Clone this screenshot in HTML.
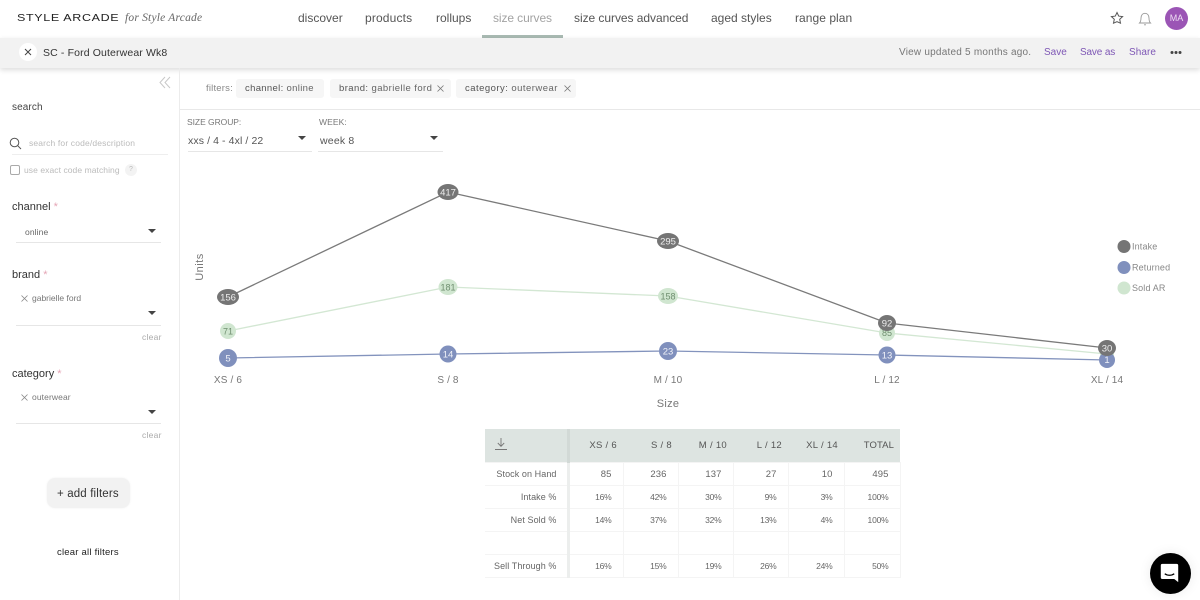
<!DOCTYPE html>
<html lang="en"><head><meta charset="utf-8"><title>Style Arcade - size curves</title>
<style>
html,body{margin:0;padding:0;background:#fff}
body{width:1200px;height:600px;overflow:hidden;position:relative;font-family:"Liberation Sans",sans-serif;color:#555}
.t{position:absolute;white-space:nowrap;line-height:16px;height:16px}
.b{position:absolute}
.nav{font-size:12px;color:#555;top:10px}
.g{font-size:9.5px;color:#777;letter-spacing:.2px}
.lab{font-size:11px;color:#333;left:12px}
.lab i{font-style:normal;color:#e5a5b5}
.ln{position:absolute;height:1px;background:#e6e6e6}
.arr{position:absolute;width:0;height:0;border-left:4px solid transparent;border-right:4px solid transparent;border-top:4px solid #444}
.chip{position:absolute;top:79px;height:19px;background:#f6f6f6;border-radius:3px}
table{position:absolute;left:485px;top:429px;width:415px;border-collapse:collapse;table-layout:fixed;font-size:9.5px;color:#666;letter-spacing:.1px}
th{background:#dde4e1;height:33px;padding:0 6px 0 0;text-align:right;font-weight:normal;font-size:9.5px;color:#555;letter-spacing:.3px;border:0}
td{padding:0 11px 0 0;text-align:right;border:1px solid #f4f4f4;height:22px;box-sizing:border-box}
td:first-child{padding-right:10px;border-right:3px solid #eceeed;border-left:0;font-size:9px;letter-spacing:.08px}
th:first-child{border-right:3px solid #d2d9d6}
tr.p td{font-size:8.5px;letter-spacing:-.2px}
tr.p td:first-child{font-size:9px;letter-spacing:.08px}
</style></head><body>

<!-- header -->
<div class="t" style="left:17px;top:10px;font-size:10.5px;color:#222;letter-spacing:.55px;transform-origin:0 50%;transform:scaleX(1.19)">STYLE ARCADE</div>
<div class="t" style="left:125px;top:10px;font:italic 11.5px/16px 'Liberation Serif',serif;color:#666;letter-spacing:.2px">for Style Arcade</div>
<div class="t nav" style="left:298px">discover</div>
<div class="t nav" style="left:365px;letter-spacing:.15px">products</div>
<div class="t nav" style="left:436px">rollups</div>
<div class="t nav" style="left:493px;color:#a3a3a3;letter-spacing:-.1px">size curves</div>
<div class="b" style="left:482px;top:35px;width:81px;height:2.5px;background:#a9bab3"></div>
<div class="t nav" style="left:574px;letter-spacing:-.05px">size curves advanced</div>
<div class="t nav" style="left:711px">aged styles</div>
<div class="t nav" style="left:795px;letter-spacing:.05px">range plan</div>

<svg class="b" style="left:1110px;top:11px" width="14" height="14" viewBox="0 0 14 14"><path d="M7 1.500l1.700 3.600 3.900.5-2.900 2.700.8 3.900L7 10.700l-3.500 1.500.8-3.900L1.400 5.600l3.900-.5z" fill="none" stroke="#555" stroke-width="1"/></svg>
<svg class="b" style="left:1138px;top:11px" width="14" height="15" viewBox="0 0 14 15"><path d="M1.500 12c1-1 1.500-2 1.500-5 0-2.700 1.600-4.700 4-4.700s4 2 4 4.700c0 3 .5 4 1.500 5zM6 13.800h2" fill="none" stroke="#999" stroke-width=".9"/></svg>
<div class="b" style="left:1165px;top:7px;width:23px;height:23px;border-radius:50%;background:#9b55b5;color:#eedff3;font-size:9px;line-height:23px;text-align:center">MA</div>

<!-- title bar -->
<div class="b" style="left:0;top:38px;width:1200px;height:30px;background:#f2f2f2;box-shadow:0 2px 5px rgba(0,0,0,.14)"></div>
<div class="b" style="left:19px;top:43px;width:18px;height:18px;border-radius:50%;background:#fff"></div>
<svg class="b" style="left:24px;top:48px" width="8" height="8" viewBox="0 0 8 8"><path d="M1 1l6 6M7 1l-6 6" stroke="#444" stroke-width="1"/></svg>
<div class="t" style="left:43px;top:45px;font-size:10.5px;color:#333;letter-spacing:.13px">SC - Ford Outerwear Wk8</div>
<div class="t" style="left:899px;top:45px;font-size:10px;color:#777;letter-spacing:.22px">View updated 5 months ago.</div>
<div class="t" style="left:1044px;top:45px;font-size:10px;color:#7e57b5">Save</div>
<div class="t" style="left:1080px;top:45px;font-size:10px;color:#7e57b5;letter-spacing:-.15px">Save as</div>
<div class="t" style="left:1129px;top:45px;font-size:10px;color:#7e57b5;letter-spacing:.05px">Share</div>
<svg class="b" style="left:1170px;top:50px" width="12" height="5"><circle cx="2" cy="2.500" r="1.500" fill="#444"/><circle cx="6" cy="2.500" r="1.500" fill="#444"/><circle cx="10" cy="2.500" r="1.500" fill="#444"/></svg>

<!-- sidebar -->
<div class="b" style="left:179px;top:68px;width:1px;height:532px;background:#ececec"></div>
<svg class="b" style="left:159px;top:76px" width="12" height="13" viewBox="0 0 12 13"><path d="M6 1L1 6.500 6 12M11 1L6 6.500 11 12" fill="none" stroke="#c8c8c8" stroke-width="1"/></svg>
<div class="t" style="left:12px;top:100px;font-size:10px;color:#444;letter-spacing:.1px">search</div>
<svg class="b" style="left:9px;top:137px" width="13" height="13" viewBox="0 0 13 13"><circle cx="5.500" cy="5.500" r="4.300" fill="none" stroke="#555"/><path d="M8.700 8.700l3.300 3.300" stroke="#555"/></svg>
<div class="t" style="left:29px;top:135px;font-size:8.5px;color:#bbb;letter-spacing:.15px">search for code/description</div>
<div class="ln" style="left:12px;top:154px;width:156px;background:#eee"></div>
<div class="b" style="left:10px;top:165px;width:8px;height:8px;border:1px solid #aaa;border-radius:2px"></div>
<div class="t" style="left:24px;top:162px;font-size:8.5px;color:#bbb;letter-spacing:.07px">use exact code matching</div>
<div class="b" style="left:125px;top:164px;width:12px;height:12px;border-radius:50%;background:#f3f3f3;color:#bbb;font-size:7px;line-height:12px;text-align:center">?</div>

<div class="t lab" style="top:199px">channel <i>*</i></div>
<div class="t" style="left:25px;top:224px;font-size:8.5px;color:#666;letter-spacing:.1px">online</div>
<div class="arr" style="left:148px;top:229px"></div>
<div class="ln" style="left:16px;top:242px;width:145px"></div>

<div class="t lab" style="top:267px">brand <i>*</i></div>
<svg class="b" style="left:21px;top:295px" width="7" height="7"><path d="M.5.500l6 6M6.500.500l-6 6" stroke="#888" stroke-width=".8"/></svg>
<div class="t" style="left:32px;top:290px;font-size:8.5px;color:#777">gabrielle ford</div>
<div class="arr" style="left:148px;top:311px"></div>
<div class="ln" style="left:16px;top:325px;width:145px"></div>
<div class="t" style="left:142px;top:329px;font-size:8.5px;color:#aaa;letter-spacing:.25px">clear</div>

<div class="t lab" style="top:366px">category <i>*</i></div>
<svg class="b" style="left:21px;top:394px" width="7" height="7"><path d="M.5.500l6 6M6.500.500l-6 6" stroke="#888" stroke-width=".8"/></svg>
<div class="t" style="left:32px;top:389px;font-size:8.5px;color:#777;letter-spacing:.1px">outerwear</div>
<div class="arr" style="left:148px;top:410px"></div>
<div class="ln" style="left:16px;top:423px;width:145px"></div>
<div class="t" style="left:142px;top:427px;font-size:8.5px;color:#aaa;letter-spacing:.25px">clear</div>

<div class="b" style="left:47px;top:478px;width:83px;height:30px;border-radius:8px;background:#f2f2f2;box-shadow:0 0 2px rgba(0,0,0,.06)"></div>
<div class="t" style="left:57px;top:486px;font-size:11.5px;color:#333;letter-spacing:.15px">+ add filters</div>
<div class="t" style="left:57px;top:545px;font-size:9.5px;color:#222;letter-spacing:.22px">clear all filters</div>

<!-- filters row -->
<div class="t g" style="left:206px;top:81px;color:#888">filters:</div>
<div class="chip" style="left:236px;width:88px"></div>
<div class="t" style="left:245px;top:81px;font-size:9.5px;color:#666;letter-spacing:.33px"><span style="color:#555">channel:</span> online</div>
<div class="chip" style="left:330px;width:121px"></div>
<div class="t" style="left:339px;top:81px;font-size:9.5px;color:#666;letter-spacing:.42px"><span style="color:#555">brand:</span> gabrielle ford</div>
<svg class="b" style="left:437px;top:85px" width="7" height="7"><path d="M.5.500l6 6M6.500.500l-6 6" stroke="#777" stroke-width=".8"/></svg>
<div class="chip" style="left:456px;width:120px"></div>
<div class="t" style="left:465px;top:81px;font-size:9.5px;color:#666;letter-spacing:.47px"><span style="color:#555">category:</span> outerwear</div>
<svg class="b" style="left:564px;top:85px" width="7" height="7"><path d="M.5.500l6 6M6.500.500l-6 6" stroke="#777" stroke-width=".8"/></svg>
<div class="ln" style="left:180px;top:109px;width:1020px;background:#e8e8e8"></div>

<!-- selectors -->
<div class="t" style="left:187px;top:114px;font-size:8.5px;color:#777;letter-spacing:-.05px">SIZE GROUP:</div>
<div class="t" style="left:188px;top:133px;font-size:10.5px;color:#555;letter-spacing:.1px">xxs / 4 - 4xl / 22</div>
<div class="arr" style="left:298px;top:136px"></div>
<div class="ln" style="left:188px;top:151px;width:124px"></div>
<div class="t" style="left:319px;top:114px;font-size:8.5px;color:#777;letter-spacing:.1px">WEEK:</div>
<div class="t" style="left:320px;top:133px;font-size:10.5px;color:#555;letter-spacing:.2px">week 8</div>
<div class="arr" style="left:430px;top:136px"></div>
<div class="ln" style="left:318px;top:151px;width:125px"></div>

<!-- chart -->
<svg class="b" style="left:0;top:0" width="1200" height="600" viewBox="0 0 1200 600" font-family="'Liberation Sans',sans-serif" text-anchor="middle">
<polyline points="228,331 448,287 668,296 887,333 1107,354" fill="none" stroke="#d3e7d3" stroke-width="1.3"/>
<polyline points="228,358 448,354 668,351 887,355 1107,360" fill="none" stroke="#8393bd" stroke-width="1.3"/>
<polyline points="228,297 448,192 668,241 887,323 1107,348" fill="none" stroke="#7a7a7a" stroke-width="1.3"/>
<g fill="#d0e6d0"><circle cx="228" cy="331" r="8"/><ellipse cx="448" cy="287" rx="9.5" ry="8"/><ellipse cx="668" cy="296" rx="10" ry="8"/><circle cx="887" cy="333" r="8"/><circle cx="1107" cy="354" r="7"/></g>
<g fill="#6f8f6f" font-size="9"><text x="228" y="334.500">71</text><text x="448" y="290.500">181</text><text x="668" y="299.500">158</text><text x="887" y="336">85</text></g>
<g fill="#8090bd"><circle cx="228" cy="358" r="9"/><circle cx="448" cy="354" r="8.5"/><circle cx="668" cy="351" r="9"/><circle cx="887" cy="355" r="8.5"/><circle cx="1107" cy="360" r="8"/></g>
<g fill="#f0f2f8" font-size="9.5"><text x="228" y="361.500">5</text><text x="448" y="357.500">14</text><text x="668" y="354.500">23</text><text x="887" y="358.500">13</text><text x="1107" y="363">1</text></g>
<g fill="#757575"><ellipse cx="228" cy="297" rx="11" ry="8"/><ellipse cx="448" cy="192" rx="10.5" ry="8"/><ellipse cx="668" cy="241" rx="11" ry="8"/><ellipse cx="887" cy="323" rx="9" ry="8"/><ellipse cx="1107" cy="348" rx="9" ry="8"/></g>
<g fill="#eee" font-size="9.5"><text x="228" y="300.500">156</text><text x="448" y="195.500">417</text><text x="668" y="244.500">295</text><text x="887" y="326.500">92</text><text x="1107" y="351.500">30</text></g>
<g fill="#777" font-size="10" letter-spacing=".15"><text x="228" y="383">XS / 6</text><text x="448" y="383">S / 8</text><text x="668" y="383">M / 10</text><text x="887" y="383">L / 12</text><text x="1107" y="383">XL / 14</text></g>
<text x="668" y="407" fill="#777" font-size="11" letter-spacing=".3">Size</text>
<text transform="translate(203,267) rotate(-90)" fill="#777" font-size="11" letter-spacing=".5">Units</text>
<circle cx="1124" cy="246.500" r="6.5" fill="#757575"/><circle cx="1124" cy="267.500" r="6.5" fill="#8090bd"/><circle cx="1124" cy="288" r="6.5" fill="#d0e6d0"/>
<g fill="#888" font-size="9" text-anchor="start" letter-spacing=".15"><text x="1132" y="249.500">Intake</text><text x="1132" y="270.500">Returned</text><text x="1132" y="291">Sold AR</text></g>
</svg>

<!-- table -->
<table>
<colgroup><col style="width:83px"><col style="width:55px"><col style="width:55px"><col style="width:55px"><col style="width:55px"><col style="width:56px"><col style="width:56px"></colgroup>
<tr><th></th><th>XS / 6</th><th>S / 8</th><th>M / 10</th><th>L / 12</th><th>XL / 14</th><th style="letter-spacing:.1px">TOTAL</th></tr>
<tr style="height:23px"><td>Stock on Hand</td><td>85</td><td>236</td><td>137</td><td>27</td><td>10</td><td>495</td></tr>
<tr class="p" style="height:23px"><td>Intake %</td><td>16%</td><td>42%</td><td>30%</td><td>9%</td><td>3%</td><td>100%</td></tr>
<tr class="p" style="height:23px"><td>Net Sold %</td><td>14%</td><td>37%</td><td>32%</td><td>13%</td><td>4%</td><td>100%</td></tr>
<tr style="height:23px"><td>&nbsp;</td><td></td><td></td><td></td><td></td><td></td><td></td></tr>
<tr class="p" style="height:23px"><td>Sell Through %</td><td>16%</td><td>15%</td><td>19%</td><td>26%</td><td>24%</td><td>50%</td></tr>
</table>
<svg class="b" style="left:494px;top:437px" width="14" height="14" viewBox="0 0 14 14"><path d="M7 1v8M3.800 6L7 9.300 10.200 6M1 12.500h12" fill="none" stroke="#777" stroke-width=".9"/></svg>

<!-- chat -->
<div class="b" style="left:1150px;top:553px;width:41px;height:41px;border-radius:50%;background:#000;box-shadow:0 0 12px rgba(0,0,0,.08)"></div>
<svg class="b" style="left:1160px;top:563px" width="19" height="20" viewBox="0 0 24 25"><path d="M3 1h18a2 2 0 0 1 2 2v21l-5-4H3a2 2 0 0 1-2-2V3a2 2 0 0 1 2-2z" fill="#fff"/><path d="M6 13.500c3.500 2.500 8.500 2.500 12 0" fill="none" stroke="#000" stroke-width="1.6"/></svg>
</body></html>
